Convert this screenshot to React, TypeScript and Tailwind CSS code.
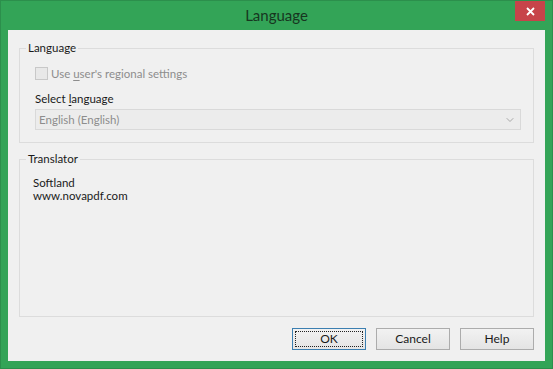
import { ChevronDown } from "lucide-react";

const font = { fontFamily: 'Lato, "Segoe UI", Arial, sans-serif' };

function GroupBox({ title, className, children }: { title: string; className: string; children: React.ReactNode }) {
  return (
    <div className={`relative border border-[#dcdcdc] ${className}`}>
      <span className="absolute -top-[9px] left-[6px] bg-[#f0f0f0] px-[2px] text-[11.5px] leading-[16px] text-[#1a1a1a]">
        {title}
      </span>
      {children}
    </div>
  );
}

function DialogButton({ label, focused }: { label: string; focused?: boolean }) {
  return (
    <button
      type="button"
      className={`relative h-[22px] w-[74px] border bg-gradient-to-b from-[#f2f2f2] to-[#e4e4e4] text-[12px] text-[#1a1a1a] ${
        focused ? "border-[#3c7fb1]" : "border-[#acacac]"
      }`}
    >
      {focused && <span className="absolute inset-[2px] border border-dotted border-[#222]" />}
      <span className="relative">{label}</span>
    </button>
  );
}

export default function App() {
  return (
    <div className="flex h-[369px] w-[553px] flex-col border border-[#2c8f4c] bg-[#33a457]" style={font}>
      <div className="relative flex h-[29px] shrink-0 items-center justify-center">
        <span className="text-[15px] text-[#17361f]">Language</span>
        <div className="absolute right-[7px] top-0 flex h-[20px] w-[30px] items-center justify-center bg-[#c7444a]">
          <svg width="9" height="9" viewBox="0 0 9 9">
            <path d="M1 1 L8 8 M8 1 L1 8" stroke="#fff" strokeWidth="1.8" />
          </svg>
        </div>
      </div>

      <div className="mx-[7px] mb-[7px] flex flex-1 flex-col bg-[#f0f0f0] px-[11px]">
        <GroupBox title="Language" className="mt-[18px] h-[95px] pl-[15px] pt-[18px]">
          <div className="flex h-[13px] items-center">
            <span className="h-[13px] w-[13px] border border-[#c8c8c8] bg-[#e8e8e8]" />
            <span className="ml-[3px] text-[11.5px] text-[#8d8d8d]">
              Use <span className="underline underline-offset-2">u</span>ser's regional settings
            </span>
          </div>
          <div className="mt-[11px] text-[11.5px] leading-[15px] text-[#1a1a1a]">
            Select <span className="underline underline-offset-2">l</span>anguage
          </div>
          <div className="mt-[3px] flex h-[21px] w-[486px] items-center justify-between border border-[#d9d9d9] bg-[#ececec] pl-[3px] pr-[4px]">
            <span className="text-[11.5px] text-[#8d8d8d]">English (English)</span>
            <ChevronDown size={12} strokeWidth={2} className="text-[#a8a8a8]" />
          </div>
        </GroupBox>

        <GroupBox title="Translator" className="mt-[16px] h-[158px] pl-[13px] pt-[16px]">
          <div className="text-[11.5px] leading-[13px] text-[#1a1a1a]">Softland</div>
          <div className="text-[11.5px] leading-[13px] text-[#1a1a1a]">www.novapdf.com</div>
        </GroupBox>

        <div className="mt-[11px] flex justify-end gap-[10px]">
          <DialogButton label="OK" focused />
          <DialogButton label="Cancel" />
          <DialogButton label="Help" />
        </div>
      </div>
    </div>
  );
}
